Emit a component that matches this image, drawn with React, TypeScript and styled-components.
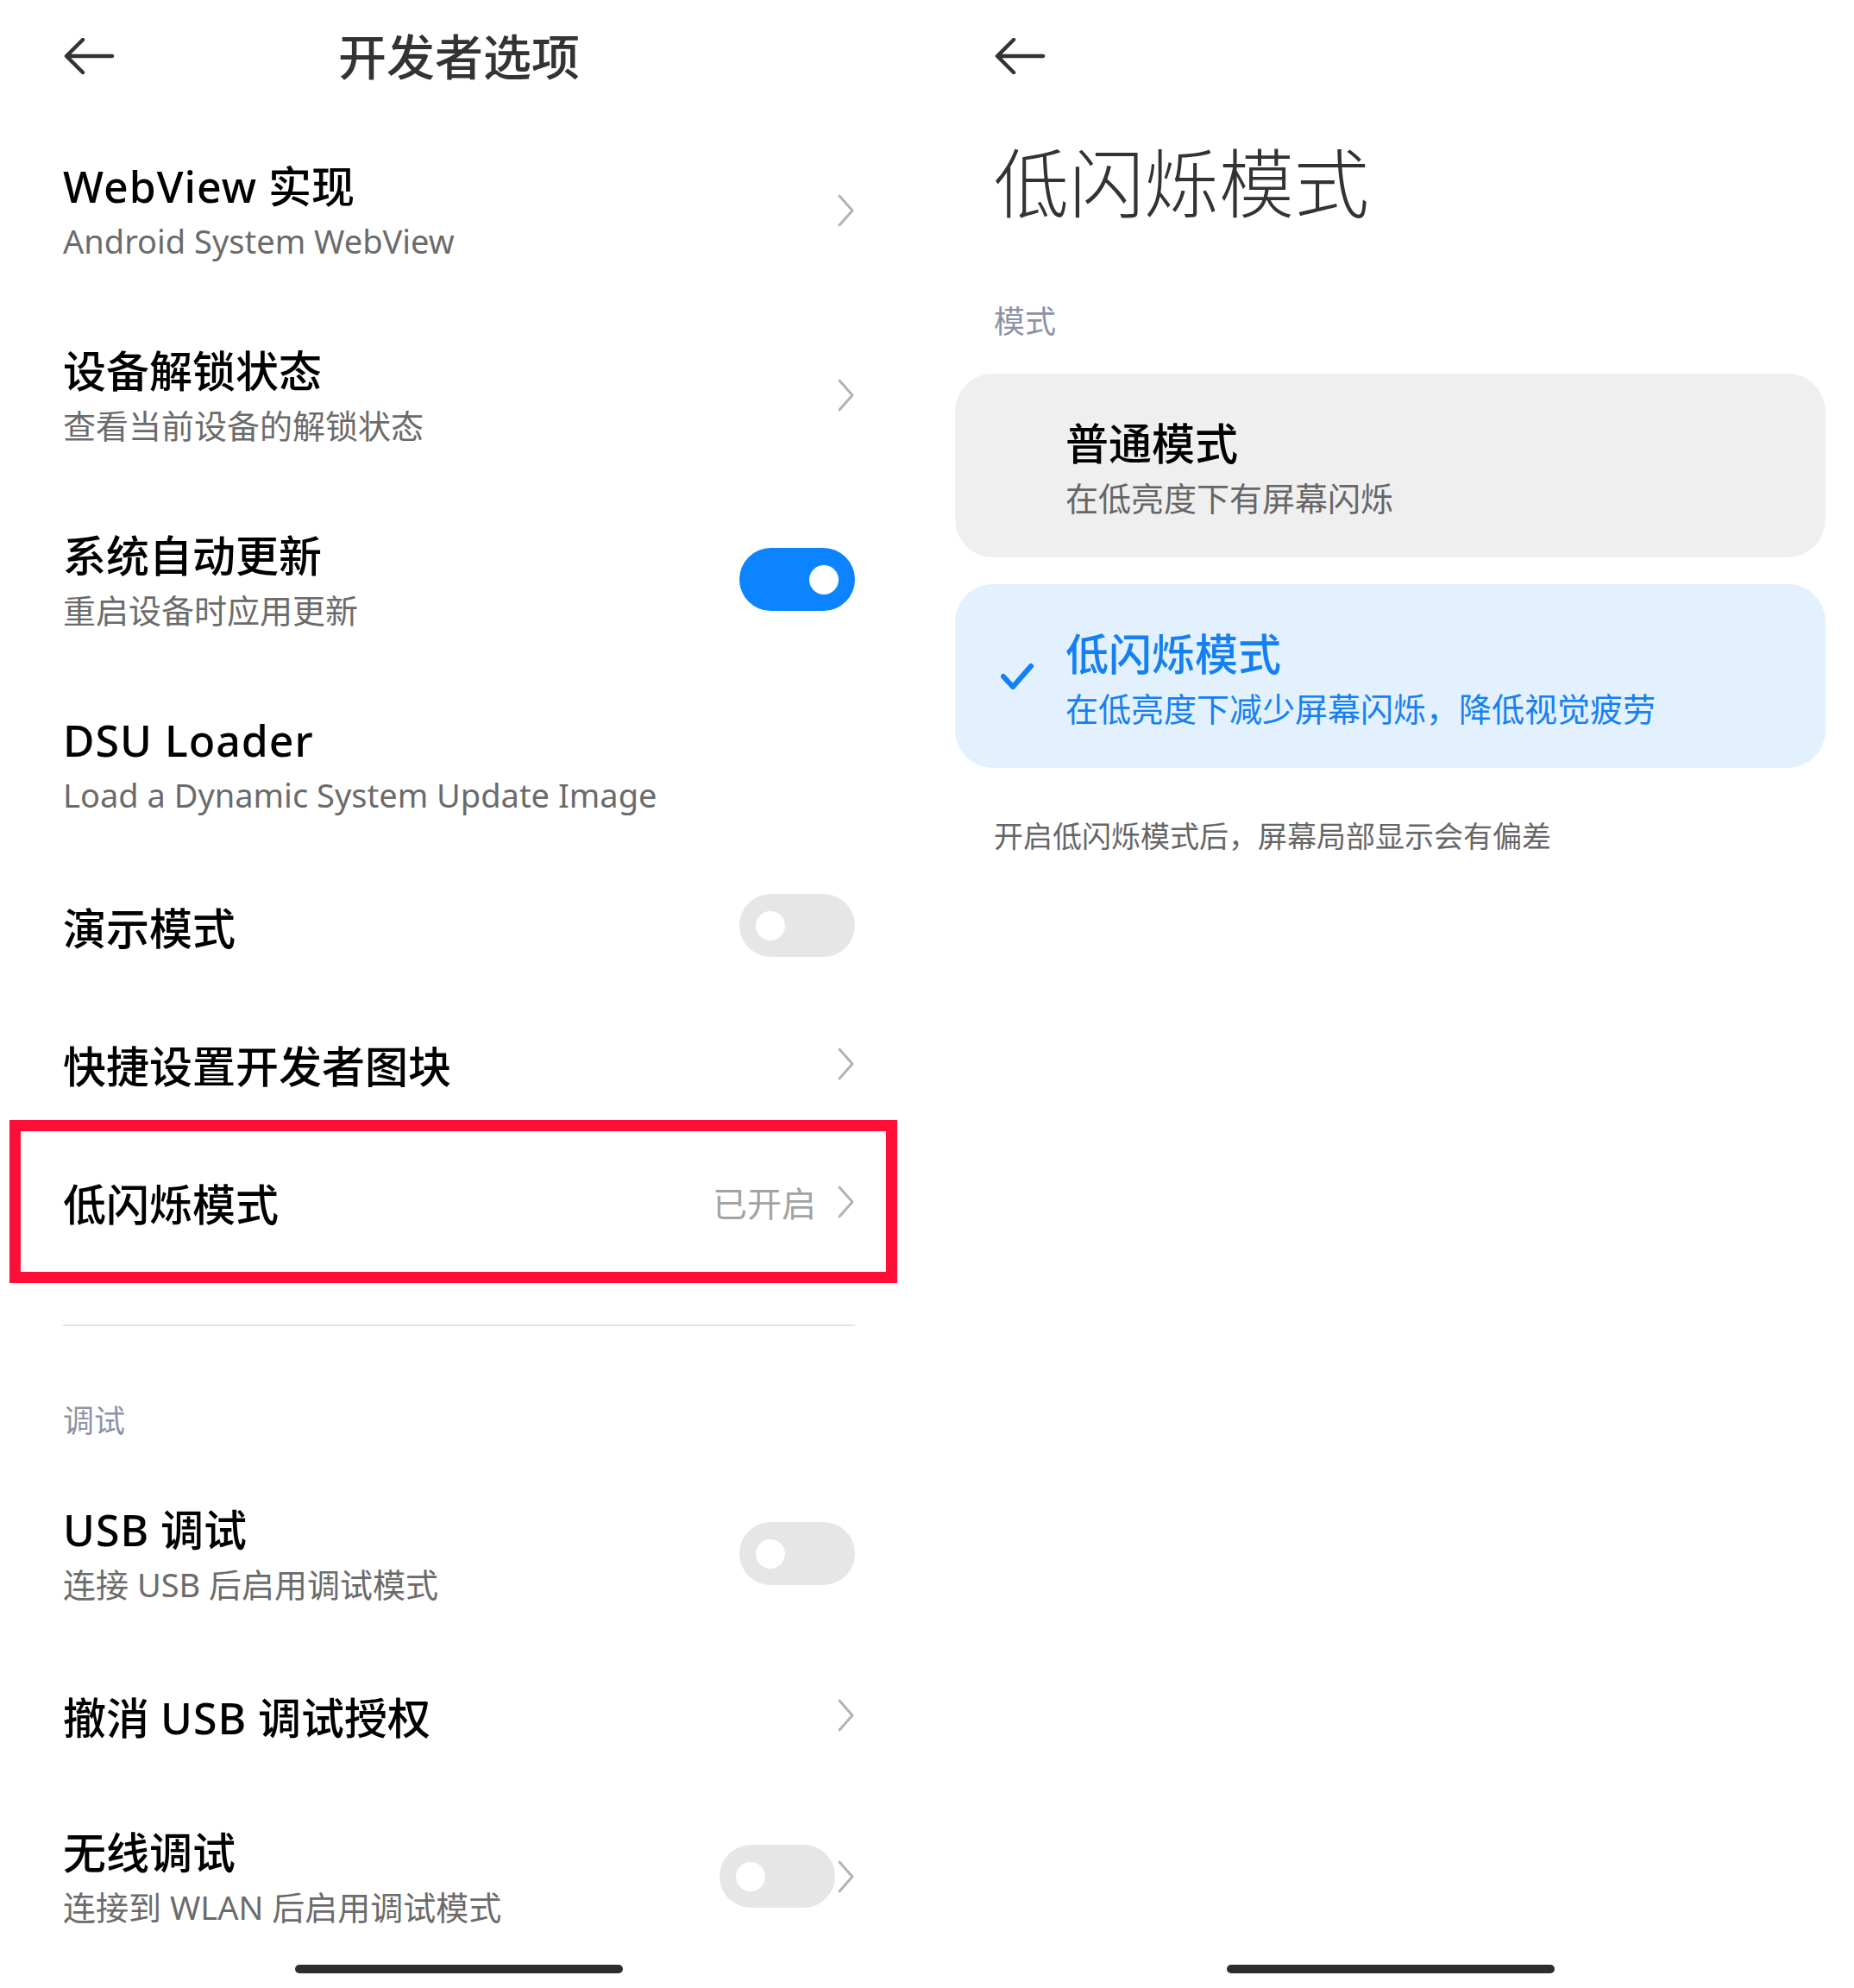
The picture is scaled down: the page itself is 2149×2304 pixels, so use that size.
import React from 'react';
import styled, { createGlobalStyle } from 'styled-components';

const Global = createGlobalStyle`
  html, body { margin: 0; padding: 0; background: #ffffff; }
  body {
    font-family: "Noto Sans", "Noto Sans CJK SC", sans-serif;
    -webkit-font-smoothing: antialiased;
  }
  * { box-sizing: border-box; }
`;

const Page = styled.div`
  display: grid;
  grid-template-columns: 1064px 1065px;
  column-gap: 15px;
  width: 2149px;
  height: 2304px;
  overflow: hidden;
  background: #ffffff;
`;

const Panel = styled.section`
  position: relative;
  display: flex;
  flex-direction: column;
  height: 2304px;
  overflow: hidden;
`;

const Header = styled.header`
  display: grid;
  grid-template-columns: 1fr auto 1fr;
  align-items: center;
  height: 130px;
  padding: 0 73px;
`;

const HeaderTitle = styled.h1`
  margin: 0 0 5px;
  font-family: "Noto Sans CJK SC", sans-serif;
  font-size: 56px;
  font-weight: 500;
  line-height: 70px;
  color: #333333;
`;

const BackButton = styled.div`
  display: flex;
  align-items: center;
  width: 60px;
  height: 42px;
`;

const List = styled.div<{ $padTop?: number }>`
  display: flex;
  flex-direction: column;
  padding-top: ${(p) => p.$padTop ?? 0}px;
`;

const Row = styled.div<{ $tall?: boolean; $marked?: boolean }>`
  position: relative;
  display: flex;
  align-items: center;
  justify-content: space-between;
  min-height: ${(p) => (p.$tall ? 214 : 160)}px;
  padding: 0 73px;
  ${(p) =>
    p.$marked
      ? `&::after {
    content: "";
    position: absolute;
    top: -18px;
    bottom: -11px;
    left: 11px;
    right: 24px;
    border: 13px solid #ff0f37;
    pointer-events: none;
  }`
      : ''}
`;

const RowText = styled.div`
  display: flex;
  flex-direction: column;
  gap: 3px;
`;

const RowTitle = styled.div`
  font-size: 50px;
  font-weight: 500;
  line-height: 60px;
  color: #000000;
  white-space: nowrap;
`;

const Latin = styled.span`
  letter-spacing: 1px;
`;

const RowSub = styled.div`
  font-size: 38px;
  font-weight: 400;
  line-height: 60px;
  color: #6b6b6b;
  white-space: nowrap;
`;

const Trailing = styled.div<{ $gap?: number }>`
  display: flex;
  align-items: center;
  gap: ${(p) => p.$gap ?? 0}px;
  margin-bottom: 7px;
  flex-shrink: 0;
`;

const Value = styled.span`
  font-family: "Noto Sans CJK SC", sans-serif;
  font-size: 40px;
  line-height: 48px;
  color: #a3a3a3;
`;

const Switch = styled.div<{ $on?: boolean }>`
  display: flex;
  align-items: center;
  justify-content: ${(p) => (p.$on ? 'flex-end' : 'flex-start')};
  width: 134px;
  height: 73px;
  padding: 0 19px;
  border-radius: 37px;
  background: ${(p) => (p.$on ? '#0d84ff' : '#e6e6e6')};
`;

const Knob = styled.span`
  width: 34px;
  height: 34px;
  border-radius: 50%;
  background: #ffffff;
`;

const Divider = styled.div`
  height: 2px;
  margin: 59px 73px 0;
  background: #e4e4e4;
`;

const SectionLabel = styled.div<{ $top: number; $bottom: number }>`
  padding: ${(p) => p.$top}px 73px ${(p) => p.$bottom}px;
  font-family: "Noto Sans CJK SC", sans-serif;
  font-size: 36px;
  line-height: 40px;
  color: #8d92a5;
`;

const HomeBar = styled.div`
  position: absolute;
  left: 50%;
  bottom: 17px;
  width: 380px;
  height: 10px;
  margin-left: -190px;
  border-radius: 5px;
  background: #2d2d2d;
`;

const BigTitle = styled.h1`
  margin: 28px 0 0;
  padding: 0 73px;
  font-family: "Noto Sans CJK SC", sans-serif;
  font-size: 87px;
  font-weight: 300;
  line-height: 100px;
  color: #333333;
`;

const Cards = styled.div`
  display: flex;
  flex-direction: column;
  gap: 31px;
  padding: 0 28px;
`;

const Card = styled.div<{ $selected?: boolean }>`
  display: flex;
  align-items: center;
  height: 213px;
  padding-left: 52px;
  border-radius: 44px;
  background: ${(p) => (p.$selected ? '#e3f0fe' : '#efefef')};
`;

const CheckSlot = styled.div`
  display: flex;
  align-items: center;
  width: 40px;
  height: 34px;
  margin-right: 36px;
`;

const CardText = styled.div`
  display: flex;
  flex-direction: column;
  gap: 5px;
  padding-top: 8px;
  font-family: "Noto Sans CJK SC", sans-serif;
`;

const CardTitle = styled.div<{ $selected?: boolean }>`
  font-size: 50px;
  font-weight: 500;
  line-height: 60px;
  color: ${(p) => (p.$selected ? '#1480f4' : '#000000')};
`;

const CardSub = styled.div<{ $selected?: boolean }>`
  font-size: 38px;
  line-height: 60px;
  color: ${(p) => (p.$selected ? '#1480f4' : '#666666')};
`;

const Note = styled.p`
  margin: 58px 0 0;
  padding: 0 73px;
  font-family: "Noto Sans CJK SC", sans-serif;
  font-size: 34px;
  line-height: 40px;
  color: #666666;
`;

const BackArrow = () => (
  <BackButton>
    <svg width="60" height="42" viewBox="0 0 60 42" fill="none">
      <path
        d="M57 21H4M23 2L4 21L23 40"
        stroke="#333333"
        strokeWidth="4.5"
        strokeLinecap="round"
        strokeLinejoin="round"
      />
    </svg>
  </BackButton>
);

const Chevron = () => (
  <svg width="20" height="38" viewBox="0 0 20 38" fill="none">
    <polyline
      points="2,2 17,19 2,36"
      stroke="#b3b3b3"
      strokeWidth="3"
      strokeLinecap="round"
      strokeLinejoin="round"
    />
  </svg>
);

const Check = () => (
  <svg width="40" height="34" viewBox="0 0 40 34" fill="none">
    <polyline
      points="4,17 15,29 36,5"
      stroke="#1480f4"
      strokeWidth="6"
      strokeLinecap="round"
      strokeLinejoin="round"
    />
  </svg>
);

type Trail = 'chevron' | 'on' | 'off' | 'off-chevron' | 'value' | 'none';

type Item = {
  title: React.ReactNode;
  key: string;
  sub?: string;
  trailing: Trail;
  marked?: boolean;
};

const top: Item[] = [
  {
    key: 'webview',
    title: (
      <>
        <Latin>WebView</Latin> 实现
      </>
    ),
    sub: 'Android System WebView',
    trailing: 'chevron',
  },
  { key: 'unlock', title: '设备解锁状态', sub: '查看当前设备的解锁状态', trailing: 'chevron' },
  { key: 'update', title: '系统自动更新', sub: '重启设备时应用更新', trailing: 'on' },
  {
    key: 'dsu',
    title: <Latin>DSU Loader</Latin>,
    sub: 'Load a Dynamic System Update Image',
    trailing: 'none',
  },
  { key: 'demo', title: '演示模式', trailing: 'off' },
  { key: 'tiles', title: '快捷设置开发者图块', trailing: 'chevron' },
  { key: 'flicker', title: '低闪烁模式', trailing: 'value', marked: true },
];

const debug: Item[] = [
  {
    key: 'usb',
    title: (
      <>
        <Latin>USB</Latin> 调试
      </>
    ),
    sub: '连接 USB 后启用调试模式',
    trailing: 'off',
  },
  {
    key: 'revoke',
    title: (
      <>
        撤消 <Latin>USB</Latin> 调试授权
      </>
    ),
    trailing: 'chevron',
  },
  { key: 'wireless', title: '无线调试', sub: '连接到 WLAN 后启用调试模式', trailing: 'off-chevron' },
];

const renderTrailing = (t: Trail) => {
  switch (t) {
    case 'chevron':
      return (
        <Trailing>
          <Chevron />
        </Trailing>
      );
    case 'on':
      return (
        <Trailing>
          <Switch $on>
            <Knob />
          </Switch>
        </Trailing>
      );
    case 'off':
      return (
        <Trailing>
          <Switch>
            <Knob />
          </Switch>
        </Trailing>
      );
    case 'off-chevron':
      return (
        <Trailing $gap={3}>
          <Switch>
            <Knob />
          </Switch>
          <Chevron />
        </Trailing>
      );
    case 'value':
      return (
        <Trailing $gap={25}>
          <Value>已开启</Value>
          <Chevron />
        </Trailing>
      );
    default:
      return null;
  }
};

const SettingRow = ({ item }: { item: Item }) => (
  <Row $tall={!!item.sub} $marked={item.marked}>
    <RowText>
      <RowTitle>{item.title}</RowTitle>
      {item.sub && <RowSub>{item.sub}</RowSub>}
    </RowText>
    {renderTrailing(item.trailing)}
  </Row>
);

export default function App() {
  return (
    <>
      <Global />
      <Page>
        <Panel>
          <Header>
            <BackArrow />
            <HeaderTitle>开发者选项</HeaderTitle>
            <span />
          </Header>
          <List $padTop={10}>
            {top.map((it) => (
              <SettingRow key={it.key} item={it} />
            ))}
          </List>
          <Divider />
          <SectionLabel $top={87} $bottom={33}>
            调试
          </SectionLabel>
          <List>
            {debug.map((it) => (
              <SettingRow key={it.key} item={it} />
            ))}
          </List>
          <HomeBar />
        </Panel>

        <Panel>
          <Header>
            <BackArrow />
            <span />
            <span />
          </Header>
          <BigTitle>低闪烁模式</BigTitle>
          <SectionLabel $top={92} $bottom={43}>
            模式
          </SectionLabel>
          <Cards>
            <Card>
              <CheckSlot />
              <CardText>
                <CardTitle>普通模式</CardTitle>
                <CardSub>在低亮度下有屏幕闪烁</CardSub>
              </CardText>
            </Card>
            <Card $selected>
              <CheckSlot>
                <Check />
              </CheckSlot>
              <CardText>
                <CardTitle $selected>低闪烁模式</CardTitle>
                <CardSub $selected>在低亮度下减少屏幕闪烁，降低视觉疲劳</CardSub>
              </CardText>
            </Card>
          </Cards>
          <Note>开启低闪烁模式后，屏幕局部显示会有偏差</Note>
          <HomeBar />
        </Panel>
      </Page>
    </>
  );
}
